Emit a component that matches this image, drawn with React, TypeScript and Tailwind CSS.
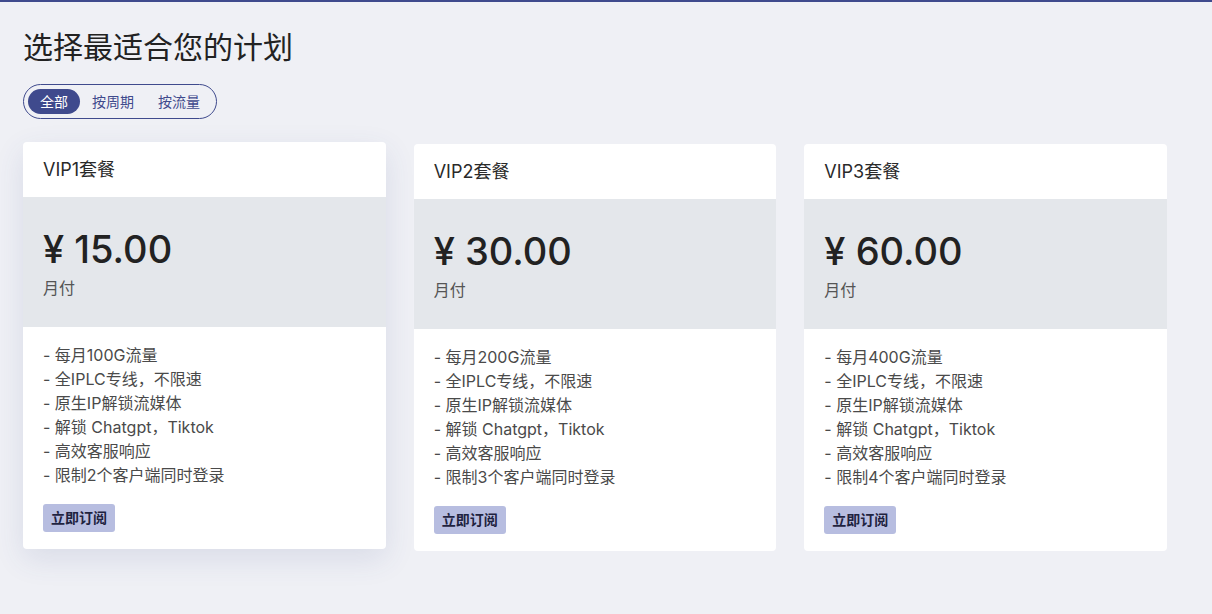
import { useState } from 'react'

const plans = [
  { name: 'VIP1套餐', price: '15.00', traffic: '100G', clients: 2 },
  { name: 'VIP2套餐', price: '30.00', traffic: '200G', clients: 3 },
  { name: 'VIP3套餐', price: '60.00', traffic: '400G', clients: 4 },
]

const tabs = ['全部', '按周期', '按流量']

function PlanCard({ plan, lifted }: { plan: (typeof plans)[number]; lifted: boolean }) {
  const features = [
    `每月${plan.traffic}流量`,
    '全IPLC专线，不限速',
    '原生IP解锁流媒体',
    '解锁 Chatgpt，Tiktok',
    '高效客服响应',
    `限制${plan.clients}个客户端同时登录`,
  ]

  return (
    <div
      className={`bg-white rounded-[4px] overflow-hidden ${
        lifted ? '-translate-y-0.5 shadow-[0_10px_30px_rgba(60,70,140,0.12)]' : ''
      }`}
    >
      <div className="h-[55px] flex items-center px-5 text-lg text-[#2a2a2a]">{plan.name}</div>
      <div className="bg-[#e4e7eb] px-5 pt-8 pb-[27px]">
        <div className="text-[38px] leading-10 font-medium text-[#222]">¥ {plan.price}</div>
        <div className="mt-[7px] text-base leading-6 text-[#555]">月付</div>
      </div>
      <div className="px-5 pt-4 pb-[17px]">
        {features.map((f, i) => (
          <div key={i} className="text-base leading-6 text-[#4a4a4a]">
            - {f}
          </div>
        ))}
        <button className="mt-[17px] h-7 px-2 rounded-[3px] bg-[#b7bde0] text-sm font-bold text-[#1f2340]">
          立即订阅
        </button>
      </div>
    </div>
  )
}

export default function App() {
  const [active, setActive] = useState(0)

  return (
    <div
      className="min-h-[614px] bg-[#eff0f5] border-t-2 border-[#3f4a8d] px-[23px] pt-[27px]"
      style={{ fontFamily: 'Inter, "Noto Sans CJK SC", sans-serif' }}
    >
      <h1 className="text-[30px] leading-9 text-[#222]">选择最适合您的计划</h1>
      <div className="mt-[19px] inline-flex items-center p-1 border border-[#3f4a8d] rounded-full">
        {tabs.map((t, i) => (
          <button
            key={t}
            onClick={() => setActive(i)}
            className={`h-[25px] px-3 rounded-full text-sm ${
              active === i ? 'bg-[#3f4a8d] text-white' : 'text-[#3f4a8d]'
            }`}
          >
            {t}
          </button>
        ))}
      </div>
      <div className="mt-[25px] w-[1144px] grid grid-cols-3 gap-7 items-start">
        {plans.map((p, i) => (
          <PlanCard key={p.name} plan={p} lifted={i === 0} />
        ))}
      </div>
    </div>
  )
}
